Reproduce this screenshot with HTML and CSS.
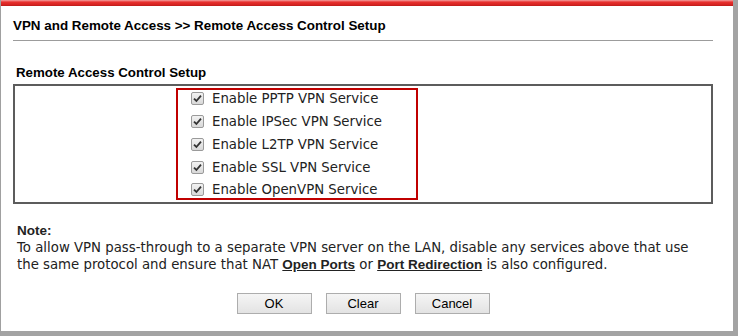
FILE: index.html
```html
<!DOCTYPE html>
<html lang="en">
<head>
    <meta charset="UTF-8">
    <title>Remote Access Control Setup</title>
    <link rel="stylesheet" href="styles.css">
</head>
<body>
    <div class="window">
        <div class="topbar"></div>
        <div class="page">
            <div class="title">VPN and Remote Access &gt;&gt; Remote Access Control Setup</div>
            <div class="rule"></div>

            <div class="section-title">Remote Access Control Setup</div>
            <div class="setup-box">
                <div class="services">
                    <div class="service-list">
                        <label class="service"><span class="check"><svg width="9" height="9" viewBox="0 0 9 9"><path d="M1 4.6 L3.4 7 L8 1.6" fill="none" stroke="#333" stroke-width="1.8"/></svg></span>Enable PPTP VPN Service</label>
                        <label class="service"><span class="check"><svg width="9" height="9" viewBox="0 0 9 9"><path d="M1 4.6 L3.4 7 L8 1.6" fill="none" stroke="#333" stroke-width="1.8"/></svg></span>Enable IPSec VPN Service</label>
                        <label class="service"><span class="check"><svg width="9" height="9" viewBox="0 0 9 9"><path d="M1 4.6 L3.4 7 L8 1.6" fill="none" stroke="#333" stroke-width="1.8"/></svg></span>Enable L2TP VPN Service</label>
                        <label class="service"><span class="check"><svg width="9" height="9" viewBox="0 0 9 9"><path d="M1 4.6 L3.4 7 L8 1.6" fill="none" stroke="#333" stroke-width="1.8"/></svg></span>Enable SSL VPN Service</label>
                        <label class="service"><span class="check"><svg width="9" height="9" viewBox="0 0 9 9"><path d="M1 4.6 L3.4 7 L8 1.6" fill="none" stroke="#333" stroke-width="1.8"/></svg></span>Enable OpenVPN Service</label>
                    </div>
                </div>
            </div>

            <div class="note">
                <div class="note-title">Note:</div>
                <p>To allow VPN pass-through to a separate VPN server on the LAN, disable any services above that use the same protocol and ensure that NAT <a href="#">Open Ports</a> or <a href="#">Port Redirection</a> is also configured.</p>
            </div>

            <div class="buttons">
                <button class="btn">OK</button>
                <button class="btn">Clear</button>
                <button class="btn">Cancel</button>
            </div>
        </div>
    </div>
</body>
</html>
```

FILE: styles.css
```css
body {
    margin: 0;
    background: #fff;
    font-family: "Liberation Sans", Arial, sans-serif;
}
.window {
    width: 738px;
    height: 336px;
    box-sizing: border-box;
    border-left: 1px solid #a0a0a0;
    border-right: 5px solid #a3a3a3;
    border-bottom: 5px solid #a3a3a3;
    overflow: hidden;
}
.topbar {
    height: 6px;
    background: linear-gradient(#f4a0a0, #e8312f 35%, #d42220 80%, #b91c1a);
}
.page {
    padding: 12px 20px 0 12px;
}
.title {
    font-size: 13.4px;
    line-height: 16px;
    font-weight: bold;
    color: #000;
}
.rule {
    height: 1px;
    background: #9c9c9c;
    margin-top: 6px;
}
.section-title {
    font-size: 13.3px;
    line-height: 16px;
    font-weight: bold;
    padding-left: 3px;
    margin-top: 24px;
}
.setup-box {
    margin-top: 3px;
    height: 120px;
    box-sizing: border-box;
    border: 2px solid #5c5c5c;
    padding: 2px 0 0 161px;
}
.services {
    width: 242px;
    height: 112px;
    box-sizing: border-box;
    border: 2px solid #c00000;
    padding: 0 0 0 13px;
}
.service-list {
    margin-top: -2.5px;
}
.service {
    display: flex;
    align-items: center;
    height: 22.75px;
    font-family: "DejaVu Sans", Verdana, sans-serif;
    font-size: 13.3px;
    color: #222;
}
.check {
    width: 11px;
    height: 11px;
    border: 1px solid #9a9a9a;
    border-radius: 2px;
    background: linear-gradient(#f2f2f2, #d8d8d8);
    display: flex;
    align-items: center;
    justify-content: center;
    margin-right: 8px;
}
.note {
    margin-top: 18px;
    padding-left: 4px;
    font-family: "DejaVu Sans", Verdana, sans-serif;
    font-size: 13.3px;
    line-height: 17px;
    color: #222;
}
.note-title {
    font-family: "Liberation Sans", Arial, sans-serif;
    font-size: 13.5px;
    font-weight: bold;
}
.note p {
    margin: 0;
}
.note a {
    font-family: "Liberation Sans", Arial, sans-serif;
    font-size: 13.5px;
    color: #222;
    font-weight: bold;
    text-decoration: underline;
}
.buttons {
    display: flex;
    justify-content: center;
    gap: 14px;
    margin-top: 20px;
}
.btn {
    width: 75px;
    height: 21px;
    padding: 0;
    font-family: "Liberation Sans", Arial, sans-serif;
    font-size: 13px;
    color: #000;
    border: 1px solid #adadad;
    background: linear-gradient(#f5f5f5, #e3e3e3);
    border-radius: 0;
}
```
